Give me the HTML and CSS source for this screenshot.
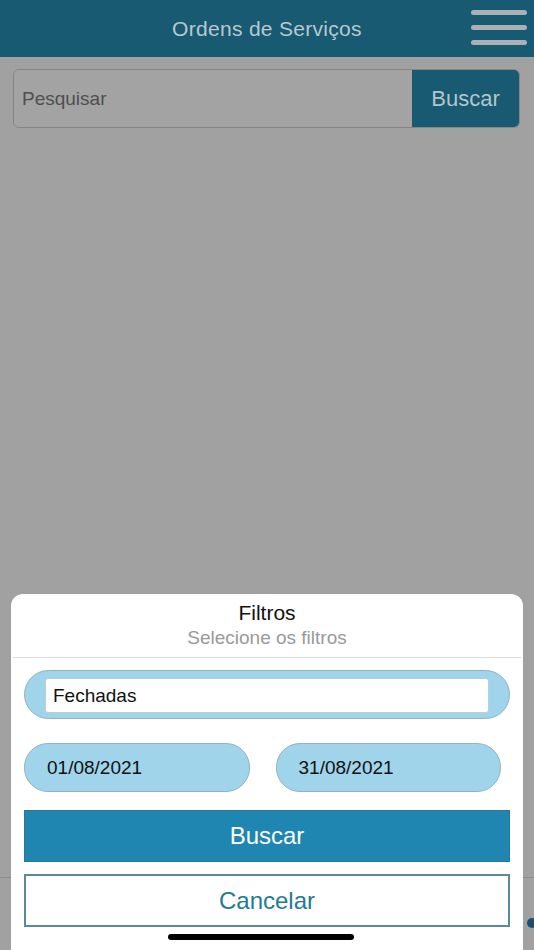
FILE: index.html
```html
<!DOCTYPE html>
<html lang="pt-BR">
  <head>
    <meta charset="UTF-8" />
    <meta name="viewport" content="width=device-width, initial-scale=1.0" />
    <title>Ordens de Serviços</title>
    <link rel="stylesheet" href="styles.css">
  </head>
  <body>
    <header>
      <h1>Ordens de Serviços</h1>
      <div class="menu">
        <span></span>
        <span></span>
        <span></span>
      </div>
    </header>
    <main>
      <div class="search">
        <div class="search-input">Pesquisar</div>
        <button class="search-btn">Buscar</button>
      </div>
      <div class="tabbar-line"></div>
      <div class="dot"></div>
    </main>
    <div class="sheet">
      <div class="sheet-head">
        <h2>Filtros</h2>
        <p>Selecione os filtros</p>
      </div>
      <div class="sheet-body">
        <div class="pill status">
          <div class="status-box">Fechadas</div>
        </div>
        <div class="dates">
          <div class="pill date">01/08/2021</div>
          <div class="pill date">31/08/2021</div>
        </div>
        <button class="btn primary">Buscar</button>
        <button class="btn outline">Cancelar</button>
      </div>
      <div class="home-bar"></div>
    </div>
  </body>
</html>
```

FILE: styles.css
```css
body {
  font-family: "Liberation Sans", Arial, sans-serif;
  margin: 0;
  padding: 0;
  width: 534px;
  height: 950px;
  background: #a1a1a1;
  position: relative;
  overflow: hidden;
}
header {
  height: 57px;
  background: #175a72;
  display: flex;
  align-items: center;
  justify-content: center;
  position: relative;
}
header h1 {
  margin: 0;
  font-size: 21px;
  font-weight: normal;
  color: #b9c8ce;
  letter-spacing: 0.3px;
}
.menu {
  position: absolute;
  right: 7px;
  top: 10px;
  width: 56px;
  display: flex;
  flex-direction: column;
  gap: 10px;
}
.menu span {
  display: block;
  height: 5px;
  border-radius: 3px;
  background: #aab0b3;
}
main {
  padding: 12px 14px 0 13px;
}
.search {
  display: flex;
  height: 59px;
  border: 1px solid #858585;
  border-radius: 6px;
  overflow: hidden;
  box-sizing: border-box;
}
.search-input {
  flex: 1;
  display: flex;
  align-items: center;
  padding-left: 8px;
  font-size: 19px;
  color: #4f4f4f;
  background: #a3a3a3;
}
.search-btn {
  width: 107px;
  border: none;
  background: #175a72;
  color: #b4c5cc;
  font-family: inherit;
  font-size: 22px;
  padding: 0;
}
.tabbar-line {
  position: absolute;
  left: 0;
  right: 0;
  top: 877px;
  height: 1px;
  background: #8c8c8c;
}
.dot {
  position: absolute;
  right: -3px;
  top: 918px;
  width: 10px;
  height: 10px;
  border-radius: 50%;
  background: #1b4f6e;
}
.sheet {
  position: absolute;
  left: 11px;
  right: 11px;
  top: 594px;
  bottom: 0;
  background: #fff;
  border-radius: 12px 12px 0 0;
}
.sheet-head {
  text-align: center;
  padding-top: 6px;
  box-sizing: border-box;
  height: 64px;
  margin: 0 2px;
  border-bottom: 1px solid #dcdcdc;
}
.sheet-head h2 {
  margin: 0;
  font-size: 21px;
  font-weight: normal;
  color: #111;
  line-height: 25px;
}
.sheet-head p {
  margin: 0;
  font-size: 19px;
  color: #999;
  line-height: 25px;
}
.sheet-body {
  padding: 12px 13px 0;
  display: flex;
  flex-direction: column;
}
.pill {
  background: #9fd4ea;
  border: 1px solid #8fb4c2;
  box-sizing: border-box;
}
.status {
  height: 49px;
  border-radius: 25px;
  padding: 7px 20px 5px;
}
.status-box {
  height: 100%;
  background: #fff;
  border-radius: 3px;
  border: 1px solid #b9cfd8;
  box-sizing: border-box;
  display: flex;
  align-items: center;
  padding-left: 7px;
  font-size: 19px;
  color: #111;
}
.dates {
  display: flex;
  gap: 26px;
  margin-top: 24px;
  padding-right: 9px;
}
.date {
  flex: 1;
  height: 49px;
  border-radius: 24px;
  display: flex;
  align-items: center;
  padding-left: 22px;
  font-size: 19px;
  color: #111;
}
.btn {
  font-family: inherit;
  font-size: 24px;
  padding: 0;
  box-sizing: border-box;
}
.primary {
  margin-top: 18px;
  height: 52px;
  background: #1e86b0;
  color: #fff;
  border: 1px solid #2a7699;
}
.outline {
  margin-top: 12px;
  height: 53px;
  background: #fff;
  color: #1f7c93;
  border: 2px solid #5d8a9b;
}
.home-bar {
  position: absolute;
  left: 157px;
  bottom: 10px;
  width: 186px;
  height: 6px;
  border-radius: 3px;
  background: #000;
}
```
